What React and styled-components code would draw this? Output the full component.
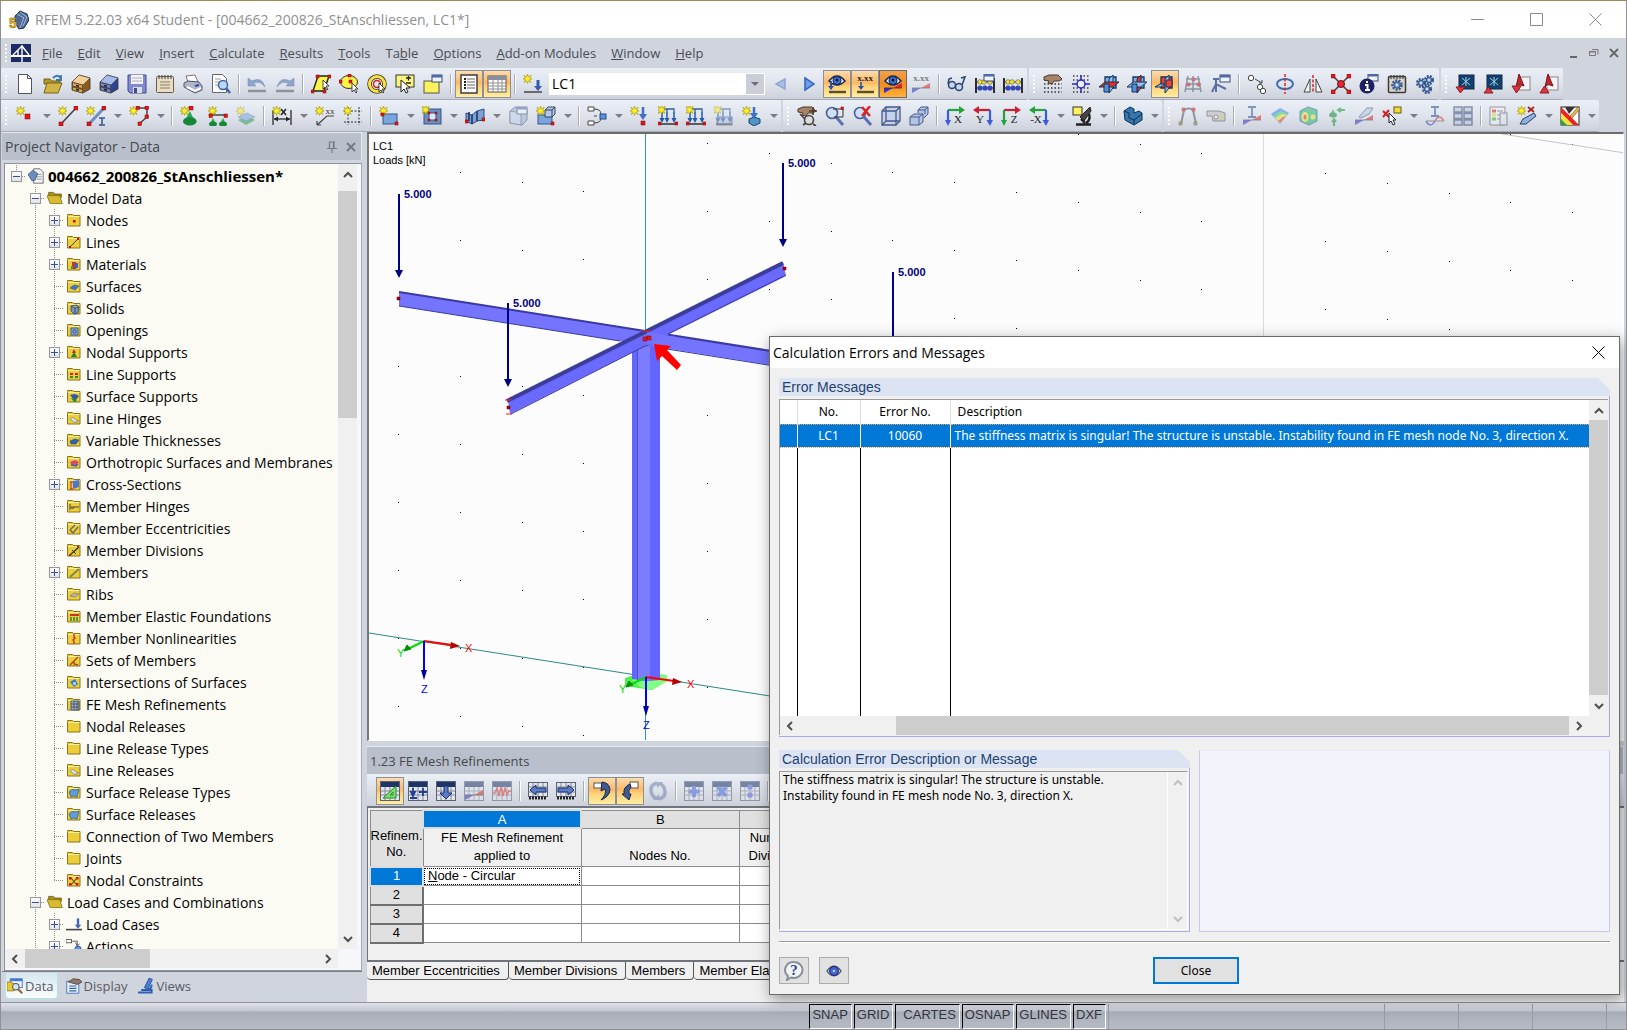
import React, { useState } from 'react';
import styled, { createGlobalStyle, css } from 'styled-components';

const UI_FONT = `'Open Sans', 'Noto Sans', sans-serif`;
const ARIAL = `'Liberation Sans', Arial, sans-serif`;
const TAHOMA = `'Noto Sans', 'Open Sans', sans-serif`;

const GlobalStyle = createGlobalStyle`
    *{
        box-sizing: border-box;
    }

    body{
        margin: 0;
        background: #d0d4dd;
        font-family: ${UI_FONT};
        font-size: 14px;
        color: #000;
    }

    button, select, textarea{
        font: inherit;
        color: inherit;
        margin: 0;
        padding: 0;
        border: 0;
        border-radius: 0;
        background: none;
    }
`

/* ---------- icons ---------- */

const Star = ({ x = 0, y = 0 }) =>
    <path
        transform={`translate(${x} ${y})`}
        d='M4.5 0l1 3 2.8-1.8L6.700 4 9 4.800 6.500 5.800 8 8.500 5.300 6.800 4.500 9.500 3.600 6.800 1 8.500 2.500 5.800 0 4.800 2.400 4 1 1.200 3.600 3z'
        fill='#fff02a' stroke='#a39400' strokeWidth='.6'
    />

const Dot = ({ x, y, s = 4, fill = '#e01818' }) =>
    <rect x={x} y={y} width={s} height={s} fill={fill} stroke='#8b0000' strokeWidth='.5' />

const Line = ({ d, c = '#444', w = 1.2, f = 'none' }) =>
    <path d={d} stroke={c} strokeWidth={w} fill={f} />

const Cabinet = ({ top, side, front }) => <>
    <path d='M1 8l7-7 11 3v11l-7 4-11-3z' fill={side} stroke='#3a3226' strokeWidth='.8' />
    <path d='M1 8l7-7 11 3-7 7z' fill={top} stroke='#3a3226' strokeWidth='.5' />
    <path d='M1.500 8.500l10 2.500v3.500l-10-2.500zM1.500 13l10 2.500V19l-10-3z' fill={front} stroke='#4b3d28' strokeWidth='.7' />
    <path d='M5 11.500l3 .8M5 15.500l3 .8' stroke='#222' strokeWidth='1.600' />
</>

const Sheet = ({ children }) => <>
    <rect x='1.500' y='2.500' width='17' height='16' rx='1' fill='#e9ddc8' stroke='#6d5c42' />
    <path d='M4 1v4M7 1v4M10 1v4M13 1v4M16 1v4' stroke='#555' strokeWidth='1.200' />
    {children}
</>

const Cube = () => <>
    <path d='M2 5l5-4 12 2v11l-5 5-12-2z' fill='#9fb4d6' stroke='#44597d' />
    <path d='M2 5l11 2v12l-11-2zM13 7l6-4' fill='#c3d2ea' stroke='#44597d' strokeWidth='.8' />
    <WindowTag />
</>

const GridTable = ({ children }) => <>
    <rect x='.5' y='.5' width='19' height='19' fill='#e2e5ec' stroke='#5a6274' />
    <rect x='1' y='1' width='18' height='5' fill='#1f3466' />
    <path d='M5 6v13M10 6v13M15 6v13M1 10h18M1 14h18' stroke='#82899a' strokeWidth='1' />
    {children}
</>

const GridArrow = ({ d }) => <>
    <rect x='.5' y='1.500' width='19' height='14' fill='#e2e5ec' stroke='#5a6274' />
    <path d='M5 2v13M10 2v13M15 2v13M1 6h18M1 11h18' stroke='#82899a' />
    <path d='M1 17h18' stroke='#222' strokeWidth='3' strokeDasharray='2 1' />
    <path d={d} fill='#5b7cc8' stroke='#1d2f66' />
</>

const Planes = ({ hot }) => <>
    <path d='M6 3h11v11H6z' fill={hot === 2 ? '#f04030' : '#7bb4ea'} stroke='#16325c' strokeWidth='1.300' />
    <path d='M10 5l4-4v13l-4 5z' fill={hot === 1 ? '#e82c20' : '#8fc2f0'} stroke='#16325c' />
    <path d={hot === 2 ? 'M0 13l5-3h5l-4 3z' : 'M0 13l6-5h14l-6 5z'} fill={hot === 0 ? '#e82c20' : '#8fc2f0'} stroke='#16325c' />
    {hot === 2
        ? <path d='M11 6h6v7h-6z' fill='#f04030' stroke='#16325c' />
        : <path d='M5 10h5v8H5z' fill='#4d92d8' stroke='#16325c' />
    }
</>

const Eye = () => <>
    <path d='M2 7q8-10 16 0-8 8-16 0z' fill='#dfe9f8' stroke='#1c2c50' strokeWidth='1.600' />
    <circle cx='10' cy='6.500' r='4' fill='#3d76d8' stroke='#10224c' />
    <circle cx='10' cy='6' r='1.600' fill='#0a1024' />
</>

const Ground = () => <path d='M2 18h17' stroke='#5a4f28' strokeWidth='2.400' />

const Slope = () => <>
    <path d='M1 19v-5l9 0z' fill='#3232d0' /><path d='M19 9v5h-9z' fill='#e22626' />
    <path d='M1 14h18' stroke='#333' strokeWidth='.8' />
</>

const Abacus = () => <>
    <path d='M1 4v15M19 4v15' stroke='#1a1a1a' strokeWidth='1.800' />
    <path d='M1 8h18M1 14h18' stroke='#333' />
    <circle cx='5' cy='8' r='2.300' fill='#f4e432' stroke='#555' strokeWidth='.6' />
    <circle cx='9' cy='8' r='2.300' fill='#f4e432' stroke='#555' strokeWidth='.6' />
    <circle cx='15' cy='8' r='2.300' fill='#f4e432' stroke='#555' strokeWidth='.6' />
    <circle cx='5' cy='14' r='2.600' fill='#3448b8' /><circle cx='10' cy='14' r='2.600' fill='#3448b8' /><circle cx='15' cy='14' r='2.600' fill='#3448b8' />
</>

const WindowTag = ({ x = 9, y = 1 }) => <>
    <rect x={x} y={y} width='10' height='7' fill='#eef3fc' stroke='#3c4c70' />
    <rect x={x} y={y} width='10' height='2.500' fill='#4f6aa6' />
</>

const Support = ({ x, y }) =>
    <g transform={`translate(${x} ${y})`}>
        <path d='M4 0l2 4H2z' fill='#2aa84a' /><ellipse cx='4' cy='6' rx='4' ry='2.500' fill='#188638' />
    </g>

const Tee = ({ a, b, letter, flip }) => <>
    <path d={flip ? 'M17 4H4' : 'M3 4h13'} stroke={a} strokeWidth='2.200' />
    <path d={flip ? 'M6 0L0 4l6 4z' : 'M14 0l6 4-6 4z'} fill={a} />
    <path d={flip ? 'M17 4v12' : 'M3 4v12'} stroke={b} strokeWidth='2.200' />
    <path d={flip ? 'M13.500 14h6.500L17 20z' : 'M0 14h6l-3 6z'} fill={b} />
    <text x={flip ? 7 : 13} y='17' textAnchor='middle' fontFamily='Liberation Serif, serif' fontSize='11' fill='#222'>{letter}</text>
</>

const Gear = ({ x, y, r }) => <>
    <circle cx={x} cy={y} r={r} fill='none' stroke='#38588f' strokeWidth={r * 0.9} strokeDasharray='1.800 1' />
    <circle cx={x} cy={y} r={r * 0.8} fill='#6f94cf' stroke='#294677' strokeWidth='.8' />
    <circle cx={x} cy={y} r={r * 0.3} fill='#eef' />
</>

const Loads = () => <>
    <path d='M4 8V3h5v5M9 8V3h7v5' stroke='#34609c' strokeWidth='1.300' fill='none' />
    <path d='M4 6v8M9 6v8M16 6v8' stroke='#3f74c4' strokeWidth='1.800' />
    <path d='M1.500 12h5L4 17zM6.500 12h5L9 17zM13.500 12h5L16 17z' fill='#2858a8' />
    <path d='M2 18h16' stroke='#333' strokeWidth='1.500' />
</>

const Hand = () =>
    <path d='M1 3l5-2h9l4 4-3 2-5 0-2 3-4-1 1-2-5-1z' fill='#a58468' stroke='#50382a' strokeWidth='1' />

const Beads = () => <path d='M1 10h18M1 14h18M1 18h18M1 6h18' stroke='#333' strokeDasharray='1.500 2' strokeWidth='1.500' />

const ICONS = {
    new: <path d='M3.500.5h9l4 4v15h-13zM12.500.5v4h4' fill='#fff' stroke='#555' />,
    open: <>
        <path d='M1 5h6l2 2h8v3H1z' fill='#b5972a' stroke='#77621a' />
        <path d='M4 9h15l-4 10H1z' fill='#d0b545' stroke='#77621a' />
        <path d='M10 4q5-5 8 1M18 1v5h-5' fill='none' stroke='#3d75b4' strokeWidth='1.800' />
    </>,
    cabinet: <Cabinet top='#f2d09a' side='#8a5a20' front='#e0a855' />,
    cabinetBlue: <Cabinet top='#a8bcec' side='#2c4590' front='#6f8bd8' />,
    save: <>
        <path d='M1 1h18v18H3l-2-2z' fill='#8189cf' stroke='#434a86' />
        <rect x='4' y='1' width='12' height='9' fill='#f4f4f8' /><path d='M5 4h10M5 7h10' stroke='#aab' />
        <rect x='6' y='13' width='9' height='6' fill='#d9dbe2' /><rect x='7' y='14' width='3' height='5' fill='#434a86' />
    </>,
    clipboard: <Sheet><path d='M5 8h10M5 11h10M5 14h10' stroke='#8b7b5e' /></Sheet>,
    print: <>
        <path d='M5 8L3 2l9-1 3 7z' fill='#fff' stroke='#777' />
        <path d='M1 9l4-2 11 1 3 4v4l-7 3L1 13z' fill='#b0b6c8' stroke='#50566a' /><path d='M4 13l8 4 6-3' fill='none' stroke='#fff' strokeWidth='2' />
        <path d='M12 12l4-1' stroke='#3340c0' strokeWidth='2' />
    </>,
    preview: <>
        <path d='M1.500.5h10l4 4v14h-14z' fill='#fff' stroke='#666' /><path d='M4 5h6M4 8h8M4 11h5' stroke='#999' />
        <circle cx='12' cy='11' r='4.500' fill='#bcd8f5' stroke='#3b66a4' strokeWidth='1.500' /><path d='M15 14l4 5' stroke='#3b66a4' strokeWidth='2.500' />
    </>,
    undo: <><path d='M1 4v8h8L6.500 9.500Q13 6 18 13 15 2 5 7z' fill='#8ea6cc' stroke='#6f87b0' strokeWidth='.5' /><path d='M1 17h18' stroke='#8e929b' strokeWidth='2.500' /></>,
    redo: <><path d='M19 4v8h-8l2.500-2.500Q7 6 2 13 5 2 15 7z' fill='#8ea6cc' stroke='#6f87b0' strokeWidth='.5' /><path d='M1 17h18' stroke='#8e929b' strokeWidth='2.500' /></>,
    selPoly: <><path d='M7 2h11l-5 15H2z' fill='#fbf34a' stroke='#222' strokeWidth='1.400' /><Dot x='5' y='1' s='3' /><Dot x='17' y='1' s='3' /><Dot x='0' y='16' s='3' /><Dot x='12' y='16' s='3' /><path d='M12 6v9l2-2 2 3 1-1-2-3h3z' stroke='#222' strokeWidth='.8' fill='#fff' /></>,
    selEllipse: <><ellipse cx='10' cy='8' rx='8.500' ry='6.500' fill='#fbf34a' stroke='#333' /><Dot x='0' y='6' s='3' /><Dot x='9' y='0' s='3' /><Dot x='10' y='6' s='3' /><path d='M13 9v9l2-2 2 3 1-1-2-3h3z' stroke='#222' strokeWidth='.8' fill='#fff' /></>,
    selRing: <><circle cx='10' cy='10' r='7.500' fill='none' stroke='#333' strokeWidth='4.500' /><circle cx='10' cy='10' r='7.500' fill='none' stroke='#fbe23a' strokeWidth='3' /><circle cx='10' cy='10' r='3.500' fill='none' stroke='#d02020' strokeWidth='1.500' /><path d='M12 9v9l2-2 2 3 1-1-2-3h3z' stroke='#222' strokeWidth='.8' fill='#fff' /></>,
    selPlus: <><rect x='1' y='1' width='18' height='12' fill='#fbf47c' stroke='#333' /><path d='M11 4h5M13.500 2v4.500M11 9h5' stroke='#222' strokeWidth='1.300' /><path d='M6 6v12l3-3 2 4 2-1-2-4h4z' fill='#fff' stroke='#222' /></>,
    selWindow: <><rect x='1' y='7' width='15' height='12' fill='#fbf25c' stroke='#555' /><WindowTag /></>,
    navigator: <><rect x='2' y='1' width='16' height='18' fill='#fff' stroke='#3b3b44' strokeWidth='1.500' /><path d='M5 5h2M5 8h2M5 11h2M5 14h2' stroke='#222' strokeWidth='2' /><path d='M8 5h8M8 8h8M8 11h8M8 14h8' stroke='#666' /></>,
    table: <><rect x='1' y='2' width='18' height='16' fill='#fff' stroke='#555' /><rect x='1' y='2' width='18' height='4' fill='#8a8fa0' /><path d='M6 6v12M11 6v12M15 6v12M1 9h18M1 12h18M1 15h18' stroke='#8d8d95' /></>,
    loadNew: <><Star /><path d='M15 6v8' stroke='#3459b0' strokeWidth='3' /><path d='M11 12h8l-4 5z' fill='#3459b0' /><path d='M1 18h18' stroke='#444' strokeWidth='1.500' /></>,
    prev: <path d='M14 5v10l-9-5z' fill='#a9c0ea' stroke='#8fa5d0' strokeWidth='1.500' />,
    next: <path d='M6 4v12l9-6z' fill='#6f9cec' stroke='#2f5fc0' strokeWidth='1.500' />,
    showLoad: <><Eye /><path d='M4 7v8' stroke='#2b50b0' strokeWidth='2' /><path d='M1 12h6l-3 4z' fill='#2b50b0' /><Ground /></>,
    showVal: <><text x='10' y='7' textAnchor='middle' fontSize='9' fontWeight='bold' fontFamily='Liberation Serif, serif' fill='#222'>x.xx</text><path d='M6 8v6' stroke='#2b50b0' strokeWidth='1.600' /><path d='M3 12h6l-3 4z' fill='#2b50b0' /><Ground /></>,
    showRes: <><Eye /><Slope /></>,
    showResVal: <><text x='10' y='7' textAnchor='middle' fontSize='9' fontWeight='bold' fontFamily='Liberation Serif, serif' fill='#222'>x.xx</text><Slope /></>,
    glasses: <><circle cx='5' cy='11' r='3.500' fill='#c6d6ee' stroke='#2f4672' strokeWidth='1.500' /><circle cx='12' cy='13' r='3.500' fill='#c6d6ee' stroke='#2f4672' strokeWidth='1.500' /><path d='M1 10l1-5 3-1M15 11l3-8-4 1' fill='none' stroke='#2f4672' strokeWidth='1.600' /></>,
    abacusWin: <><Abacus /><WindowTag x='9' y='0' /></>,
    abacus: <Abacus />,
    handGrid: <><Beads /><Hand /></>,
    gridSnap: <><path d='M2 2h16M2 6h16M2 14h16M2 18h16' stroke='#444' strokeDasharray='1.500 2' strokeWidth='1.500' /><path d='M10 1v18M1 10h18' stroke='#2a2ab8' strokeWidth='1.500' /><circle cx='10' cy='10' r='4' fill='#eef' stroke='#2a2ab8' strokeWidth='1.500' /></>,
    planeXY: <Planes hot={0} />,
    planeYZ: <Planes hot={1} />,
    planeXZ: <Planes hot={2} />,
    meshGrid: <><Line d='M5 2L2 18M10 2v16M15 2l3 16M3 5h14M3 10h15M2 15h16' c='#4b5766' w={1.500} /><Dot x='9' y='4' s='3' /><Dot x='4' y='9' s='3' /><Dot x='14' y='9' s='3' /></>,
    axisWin: <><path d='M5 18v-8l10 5M5 10L1 18M5 10V4M2 5h6' stroke='#5a70a4' strokeWidth='2' fill='none' /><WindowTag /></>,
    moveCopy: <><circle cx='4' cy='4' r='2.700' fill='#fff' stroke='#444' /><circle cx='13' cy='13' r='2.700' fill='#fff' stroke='#444' /><circle cx='16' cy='17' r='2.700' fill='#fff' stroke='#444' /><path d='M8 5l7 4M15 6v3h-3' stroke='#444' fill='none' /></>,
    rotate: <><ellipse cx='10' cy='10' rx='8' ry='5' fill='none' stroke='#3d6bb0' strokeWidth='2' /><path d='M10 0v20' stroke='#d22' strokeDasharray='3 1.500' strokeWidth='1.500' /></>,
    mirror: <><path d='M7 5v13H1zM13 5v13h6z' fill='#f4f4f4' stroke='#444' /><path d='M10 1v18' stroke='#d22' strokeDasharray='3 1.500' strokeWidth='1.500' /></>,
    explode: <><Line d='M2 2l16 16M18 2L2 18' w={1.600} /><circle cx='10' cy='10' r='3.500' fill='#e23' stroke='#611' /><Dot x='0' y='0' /><Dot x='16' y='0' /><Dot x='0' y='16' /><Dot x='16' y='16' /></>,
    info: <><WindowTag x='9' y='0' /><circle cx='8' cy='12' r='7.500' fill='#1c1f62' /><path d='M8 7v2M6 11h2.500v5M6 16h5' stroke='#fff' strokeWidth='2' fill='none' /></>,
    sheetGear: <><rect x='1.500' y='2.500' width='17' height='16' rx='1' fill='#d9d4cc' stroke='#3d3a34' strokeWidth='1.500' /><path d='M4 1v4M7 1v4M10 1v4M13 1v4M16 1v4' stroke='#444' strokeWidth='1.200' /><Gear x={10} y={11} r={4} /></>,
    gears: <><Gear x={6} y={9} r={3.500} /><Gear x={14} y={6} r={3.500} /><Gear x={12} y={15} r={3.500} /></>,
    importDxf: <><rect x='4' y='1' width='15' height='14' fill='#14406e' stroke='#0c294a' /><path d='M7 4l8 7M15 4l-8 7M11 3v9' stroke='#9fd6e8' /><path d='M1 13h9l-4.500 6z' fill='#e2343a' stroke='#8b1a1f' /></>,
    exportDxf: <><rect x='4' y='1' width='15' height='14' fill='#14406e' stroke='#0c294a' /><path d='M7 4l8 7M15 4l-8 7M11 3v9' stroke='#9fd6e8' /><path d='M1 19h9l-4.500-6z' fill='#e2343a' stroke='#8b1a1f' /></>,
    importPdf: <><rect x='8' y='3' width='11' height='13' fill='#f4f4f6' stroke='#888' /><path d='M8 0l5 12q-8-3-8 1z' fill='#c0262c' stroke='#7a1014' /><path d='M1 12h9l-4.500 7z' fill='#e2343a' stroke='#8b1a1f' /></>,
    exportPdf: <><rect x='8' y='3' width='11' height='13' fill='#f4f4f6' stroke='#888' /><path d='M9 0l5 12q-7-3-8 1z' fill='#c0262c' stroke='#7a1014' /><path d='M1 19h9l-4.500-7z' fill='#e2343a' stroke='#8b1a1f' /></>,

    node: <><Star x={1} /><Dot x='10' y='8' s='5' /></>,
    line: <><Line d='M3 18L18 2' w={1.600} /><Star /><Dot x='1' y='16' /><Dot x='16' y='0' /></>,
    member: <><Line d='M3 18L18 2' c='#6b90c8' w={3} /><Star /><Dot x='1' y='16' /><Dot x='16' y='0' /><path d='M13 12h6M16 12v7M13 19h6' stroke='#3a5590' strokeWidth='1.600' /></>,
    polyline: <><Line d='M8 2h10v9l-8 7' w={1.500} /><Star /><Dot x='7' y='0' s='3.500' /><Dot x='16' y='0' s='3.500' /><Dot x='16' y='9' s='3.500' /><Dot x='9' y='16' s='3.500' /></>,
    nodeSup: <><g transform='translate(3 5) scale(1.700)'><Support x={0} y={0} /></g><Star /><Dot x='9' y='0' s='4' /></>,
    lineSup: <><Line d='M2 9h16' w={1.500} /><Star /><Dot x='1' y='8' s='3.500' /><Dot x='16' y='8' s='3.500' /><Support x={1} y={12} /><Support x={11} y={12} /></>,
    surfSup: <><path d='M2 14l9-4 8 4-9 5z' fill='#2f9c56' /><path d='M2 11l9-4 8 4-9 4z' fill='#7ea8dc' stroke='#3c66a0' strokeWidth='.6' /><Star /></>,
    dim: <><Line d='M1 4v15M19 4v15M2 13h16' w={1.500} /><path d='M2 13l4-2.500v5zM18 13l-4-2.500v5z' fill='#222' /><Star /><path d='M9 3l5 6M14 3l-5 6' stroke='#222' strokeWidth='1.500' /></>,
    dimXX: <><Line d='M19 10H12L2 19M2 19v-4M2 19h4' /><Star /><text x='15' y='8' fontSize='9' fontFamily='Liberation Serif, serif' textAnchor='middle' fill='#333'>xx</text></>,
    guide: <><path d='M5 1v18M16 1v18M1 5h18M1 16h18' stroke='#333' strokeDasharray='2 1.500' /><Star /></>,
    surface: <><rect x='4' y='8' width='14' height='10' fill='#7aa6dc' stroke='#34568c' /><Star /><Dot x='2' y='7' s='3' /><Dot x='16' y='16' s='3' /></>,
    opening: <><rect x='2' y='3' width='17' height='15' fill='#6d8fc0' stroke='#34568c' /><rect x='7' y='7' width='7' height='7' fill='#dfe7f3' stroke='#34568c' /><Star x={-1} y={-1} /><Dot x='6' y='6' s='2' /><Dot x='13' y='6' s='2' /><Dot x='6' y='13' s='2' /><Dot x='13' y='13' s='2' /></>,
    curved: <><path d='M1 7l6 2 5-4 7-2v11l-7 1-5 3-6-3z' fill='#7ba1d6' stroke='#284a80' /><Line d='M7 9v9M12 5v10M4 6v9' c='#1c3868' w={1.600} /><Dot x='0' y='14' s='3' /><Dot x='17' y='12' s='3' /></>,
    solid: <Cube />,
    solidNew: <><rect x='2' y='9' width='14' height='9' fill='#7aa6dc' stroke='#34568c' /><path d='M9 4l3-3h7v7l-3 3H9z' fill='#b5c8e6' stroke='#33435e' /><path d='M9 4h7v7M16 4l3-3' fill='none' stroke='#33435e' /><Star /><Dot x='15' y='16' s='3' /></>,
    combos: <><path d='M1 1h6v4H1zM1 15h6v4H1z' fill='#fff' stroke='#444' /><path d='M7 3q7 0 7 5M7 17q7 0 7-5M7 10h3' stroke='#444' fill='none' /><rect x='13' y='8' width='6' height='5' fill='#5793e2' stroke='#254c88' /></>,
    nodalLoad: <><path d='M13 1v10' stroke='#3d70c8' strokeWidth='2.500' /><path d='M9 8h8l-4 6z' fill='#3d70c8' /><Star /><Dot x='11' y='15' /></>,
    memLoad: <><Loads /><Star x={-1} y={-1} /><Dot x='0' y='16' s='3' /><Dot x='17' y='16' s='3' /></>,
    surfLoad: <><rect x='3' y='11' width='15' height='8' fill='#b5c8e6' stroke='#44597d' /><Loads /><Star x={-1} y={-1} /></>,
    freeLoad: <><path d='M7 13l5-2 6 2v4l-6 3-5-3z' fill='#4e96c8' stroke='#1d4266' /><path d='M12 1v7' stroke='#3d70c8' strokeWidth='2.500' /><path d='M8 7h8l-4 6z' fill='#3d70c8' /><Star /></>,

    handMove: <><Hand /><circle cx='12' cy='14' r='4.500' fill='#ddd' stroke='#444' strokeWidth='1.600' /><path d='M3 8l5 5M6 19l3-2M16 1v8M12 5h8M16 18l3 2' stroke='#4a3a2c' strokeWidth='1.600' /></>,
    zoomWin: <><circle cx='7' cy='7' r='5.500' fill='#cfe0f6' stroke='#4a5f9a' strokeWidth='1.600' /><path d='M11 11l7 8' stroke='#5a70b4' strokeWidth='3' /><path d='M8 3h10v8H9' stroke='#333' fill='none' /><Dot x='16' y='1' s='2.500' /></>,
    zoomX: <><circle cx='7' cy='7' r='5.500' fill='#cfe0f6' stroke='#4a5f9a' strokeWidth='1.600' /><path d='M11 11l7 8' stroke='#5a70b4' strokeWidth='3' /><path d='M9 1l8 9M17 0L9 10' stroke='#d22' strokeWidth='2.500' /></>,
    isoView: <><path d='M1 5l4-4h14v14l-4 4H1z' fill='#c6d2ea' stroke='#46598a' strokeWidth='1.300' /><path d='M1 5h14v14M15 5l4-4M5 1v14h14M5 15l-4 4' fill='none' stroke='#46598a' strokeWidth='1.300' /></>,
    multiCube: <path d='M1 11h9v8H1zM1 11l4-3h9v8l-4 3M10 11l4-3M9 7V4l3-3h7v7l-4 4M9 4h7v4M16 4l3-3' fill='#b4c4e4' stroke='#46598a' />,
    viewX: <Tee a='#24a33c' b='#3b5bd8' letter='X' />,
    viewY: <Tee a='#cc1f30' b='#3b5bd8' letter='Y' flip />,
    viewZ: <Tee a='#cc1f30' b='#24a33c' letter='Z' />,
    viewMX: <Tee a='#24a33c' b='#3b5bd8' letter='-X' flip />,
    scope: <><rect x='1' y='1' width='9' height='8' fill='#fbf25c' stroke='#333' /><path d='M18 1l-10 10 4 4 7-10z' fill='#444' stroke='#222' /><path d='M4 18.500h15M9 13l4 4M17 8q2 6-3 9' stroke='#222' strokeWidth='2.400' fill='none' /></>,
    block: <><path d='M1 5l6-4 4 2v4l5-2 3 2v7l-8 5-9-5z' fill='#3576ae' stroke='#10304e' /><path d='M1 5l5 2v5l5 2 8-6M11 14v5' fill='none' stroke='#10304e' /></>,
    frame: <><Line d='M3 18L6 4q5-3 9 0l3 14' c='#555' w={2} /><Dot x='4' y='2' s='3' /><Dot x='14' y='2' s='3' /><Dot x='1' y='16' s='3' fill='#2b2' /><Dot x='16' y='16' s='3' fill='#2b2' /></>,
    section: <><path d='M1 5h12l6 2v8H7l-1-5H1z' fill='#bbb' stroke='#555' /><circle cx='10' cy='11' r='2' fill='#fff' stroke='#555' /><path d='M14 9h3v4h-3z' fill='#cc3' /></>,
    beamRes: <><path d='M6 1h8M10 1v10M6 11h8' stroke='#2a4f96' strokeWidth='1.800' /><Slope /></>,
    surfRes: <><path d='M1 8L10 2l9 5-9 11z' fill='#3b82f0' /><path d='M3 10l8-5 7 3-8 9z' fill='#3bd06a' /><path d='M5 12l7-4 5 1-7 8z' fill='#f3e03a' /><path d='M8 15l5-4 3-1-6 7z' fill='#ea3a2a' /></>,
    solidRes: <><path d='M2 5l8-4 9 3v11l-8 4-9-4z' fill='#29b867' stroke='#1c5fa8' /><ellipse cx='7' cy='11' rx='3.500' ry='5' fill='#f1e336' /><ellipse cx='7' cy='11' rx='1.500' ry='2.500' fill='#e0352a' /><circle cx='15' cy='11' r='2.500' fill='#f1e336' /></>,
    supRes: <><Support x={3} y={3} /><path d='M19 4h-6M15 2l-3 2 3 2M8 20v-6M6 16l2-3 2 3' stroke='#1d9a38' strokeWidth='2' fill='none' /></>,
    pen: <><path d='M5 11l8-9h6l-4 6-8 4z' fill='#b7cbe8' stroke='#3c5682' /><Slope /></>,
    delRes: <><path d='M1 5l6 6M7 4l-6 7' stroke='#c22' strokeWidth='2' /><rect x='12' y='1' width='7' height='6' fill='#f2dc3a' stroke='#665a10' /><path d='M7 7l7 7h-3l2 4-2 1-2-4-2 2z' fill='#fff' stroke='#222' /></>,
    sineRes: <><path d='M6 1h8M10 1v9M6 10h8' stroke='#2a4f96' strokeWidth='1.800' /><path d='M1 15h18' stroke='#333' strokeWidth='.8' /><path d='M1 15q4 8 9 0' fill='none' stroke='#33c' strokeWidth='1.400' /><path d='M10 15q4-8 9 0' fill='none' stroke='#c33' strokeWidth='1.400' /></>,
    grids: <path d='M1 1h8v5H1zM11 1h8v5h-8zM1 7.500h8v5H1zM11 7.500h8v5h-8zM1 14h8v5H1zM11 14h8v5h-8z' fill='#b9c6e2' stroke='#3c4d72' strokeWidth='1.500' />,
    legend: <><path d='M1 1h15v18H1z' fill='#f2f2f4' stroke='#555' /><path d='M3 5h4' stroke='#d22' strokeWidth='3' /><path d='M3 9h4' stroke='#dd2' strokeWidth='3' /><path d='M3 13h4' stroke='#2b4' strokeWidth='3' /><path d='M8 5h6M8 9h6M8 13h6' stroke='#555' /><rect x='11' y='7' width='7' height='12' fill='#dfe3ec' stroke='#556' /></>,
    starPen: <><Star /><path d='M11 1l6 5M17 1l-6 5' stroke='#a22' strokeWidth='1.800' /><path d='M3 18l3-5 11-6 2 3-10 8z' fill='#8fb2e0' stroke='#2d3f60' /></>,
    palette: <><rect x='1' y='1' width='18' height='18' fill='#fff' stroke='#222' /><path d='M1 1l18 18h-6L1 7z' fill='#e22' /><path d='M1 7l12 12H7L1 13z' fill='#f4e432' /><path d='M1 13l6 6H1z' fill='#28a838' /><path d='M5 1h10l-6 7z' fill='#333' /><path d='M10 10l8-9 2 2-8 9z' fill='#e9b23a' stroke='#654' strokeWidth='.6' /></>,

    tblEdit: <GridTable><path d='M3 17L16 5v12zM10 14h3v-3z' fill='#7ddf6c' stroke='#2a8a2a' /></GridTable>,
    tblPlus: <GridTable><path d='M5 7v6M3 11l2 4 2-4zM2 17h7M11 11h8M15 7v8' stroke='#223f94' strokeWidth='1.800' /></GridTable>,
    tblDown: <GridTable><path d='M8 5h4v7h4l-6 6-6-6h4z' fill='#5b7cc8' stroke='#1d2f66' /></GridTable>,
    tblSlope: <GridTable><Slope /></GridTable>,
    tblWave: <GridTable><path d='M1 12h2l2-5 2 8 2-9 2 9 2-8 2 7 2-4h3' stroke='#d33' fill='none' strokeWidth='1.400' /></GridTable>,
    tblLeft: <GridArrow d='M2 9l6-5v3h10v4H8v3z' />,
    tblRight: <GridArrow d='M18 9l-6-5v3H2v4h10v3z' />,
    syncR: <><rect x='2' y='2' width='8' height='5' fill='#fff' stroke='#555' /><path d='M10 1q8 1 8 8-1 7-9 10 6-6 4-11l-4 2z' fill='#3e5c92' stroke='#182848' /></>,
    syncL: <><rect x='10' y='1' width='8' height='6' fill='#fff' stroke='#555' /><path d='M10 3Q3 6 4 13l-2 0 7 6 2-6H9q-1-4 2-7z' fill='#3e5c92' stroke='#182848' /></>,
    refresh: <><path d='M9 2Q2 4 3 10t5 7M11 18q7-2 6-8t-5-7' fill='none' stroke='#7088ac' strokeWidth='3.500' /><path d='M5 19h6v-6zM15 1H9v6z' fill='#7088ac' /></>,
    cellAdd: <GridTable><path d='M10 5v11M4.500 10.500h11' stroke='#4866d8' strokeWidth='4' /></GridTable>,
    cellDel: <GridTable><path d='M6 6l8 9M14 6l-8 9' stroke='#4866d8' strokeWidth='4' /></GridTable>,
    cellDot: <GridTable><path d='M8 4h4v4H8zM8 12h4v4H8z' fill='#4866d8' stroke='#4866d8' /></GridTable>,

    app: <><path d='M6 6l5-5 7 3 2 6-5 8-5 1-4-6z' fill='#4c6894' stroke='#1d3354' /><path d='M8 4l7 4M11 2l7 5M15 7l-4 11M18 7l-4 9' stroke='#a9bcd8' /><text x='0' y='18' fontSize='14' fontWeight='bold' fontFamily='Liberation Sans, sans-serif' fill='#f0c020' stroke='#6b5200' strokeWidth='.5'>5</text></>,
    logo: <><path d='M0 1h20v18H0z' fill='#1c2a66' /><path d='M0 13h20' stroke='#fff' strokeWidth='2' /><path d='M11 2v17M11 3L2 12M11 3l7 9M7 7v6' stroke='#fff' strokeWidth='1.400' fill='none' /></>,
    doc: <><path d='M7 1h8l4 4v14H7z' fill='#f3f3f3' stroke='#555' /><path d='M11 8h6M11 11h6M11 14h6' stroke='#888' /><path d='M0 8l6-5 6 4-3 8-4 1z' fill='#6f8dba' stroke='#34517e' /></>,
    folderOpen: <><path d='M2 3h6l2 2h8v4H2z' fill='#a8911e' stroke='#6d5c10' /><path d='M0 7h16l3 10H4z' fill='#d8bc2e' stroke='#7d6914' /></>,
    loadCase: <><path d='M0 17h20' stroke='#444' strokeWidth='2' /><path d='M15 3v9' stroke='#4166b8' strokeWidth='3' /><path d='M11 11h8l-4 5z' fill='#4166b8' /></>,
    action: <><rect x='0' y='2' width='7' height='4' fill='#fff' stroke='#444' /><path d='M8 4h6v5M12 6l2 4 3-3' stroke='#333' fill='none' /><circle cx='15' cy='14' r='4' fill='#5b8fe8' stroke='#28509c' /></>,
    data: <><rect x='4' y='1' width='15' height='11' fill='#eef4fc' stroke='#3466b0' /><rect x='4' y='1' width='15' height='3' fill='#3f7ad8' /><path d='M0 5h6l1 2h2v9H0z' fill='#eacb2c' stroke='#8b7412' /><circle cx='11' cy='11' r='4' fill='#d6e6fa' stroke='#555' strokeWidth='1.300' /><path d='M14 14l5 5' stroke='#96622c' strokeWidth='2.500' /></>,
    display: <><rect x='1' y='4' width='15' height='15' fill='#e8f0fc' stroke='#3466b0' /><path d='M4 10h9M4 13h9M4 16h9' stroke='#3466b0' strokeWidth='1.500' /><path d='M3 5l6-4 8 1 3 3-6 3z' fill='#8e7a6c' stroke='#4a3c32' /></>,
    views: <><path d='M14 0l4 2-6 12-4-2z' fill='#4a7fd8' stroke='#1f468c' /><path d='M0 18h17v-3H4M12 14q5 0 5-6' fill='none' stroke='#2f5fb4' strokeWidth='2.500' /></>,
    help: <><path d='M10 1a8.500 8 0 1 1-3 15.500L3 19l1-4A8.500 8 0 0 1 10 1z' fill='#f1f3f7' stroke='#8a8f99' strokeWidth='2' /><text x='10' y='14' textAnchor='middle' fontSize='15' fontWeight='bold' fontFamily='Liberation Serif, serif' fill='#2b4290'>?</text></>,
    eye: <><path d='M2 10q8-11 16 0-8 11-16 0z' fill='#cfd6e4' stroke='#444c60' strokeWidth='1.300' /><circle cx='10' cy='10' r='5' fill='#3e5fd6' stroke='#18245c' /><circle cx='10' cy='10' r='1.500' fill='#bcd' /></>,
};

const Icon = ({ name, size = 20 }) =>
    <svg width={size} height={size} viewBox='0 0 20 20' aria-hidden='true'>{ICONS[name]}</svg>

// small drawing on top of a tree folder, 16x16 grid
const GLYPHS = {
    node: <path d='M7 8h2.500v2.500H7z' fill='#c00' />,
    line: <><path d='M4 13l8-8' stroke='#444' /><path d='M3 12h2v2H3zM11 4h2v2h-2z' fill='#c00' /></>,
    material: <><path d='M6 6h4v7H6z' fill='#c33' /><path d='M9 7h3v5H9z' fill='#36c' /><path d='M5 10h2v3H5z' fill='#3a3' /></>,
    surface: <path d='M4 10l4-3 5 1-4 4z' fill='#3c78c8' stroke='#1c4888' strokeWidth='.5' />,
    solid: <path d='M5 6l6-1 2 2-1 6-4 1-3-3zM5 6l4 2 4-1M9 8v6' fill='#7894c0' stroke='#26426e' strokeWidth='.8' />,
    opening: <path d='M5 6h7v7H5zM7 8h3v3H7z' fill='#8db2e4' stroke='#35588c' />,
    support: <><path d='M8 5l2 4H6z' fill='#d22' /><path d='M8 8l3 5H5z' fill='#188638' /></>,
    lineSup: <><path d='M4 7h3v2H4zM9 7h3v2H9z' fill='#c22' /><path d='M4 10h3v2H4zM9 10h3v2H9z' fill='#2a8a3a' /></>,
    surfSup: <><path d='M4 7l5-1 4 2-4 5z' fill='#2c5aa8' /><path d='M5 10l4 1 2 2-3 1z' fill='#1d8a3c' /></>,
    hinge: <path d='M4 9q3-3 5 0t3 1v2H8z' fill='#dfe8f5' stroke='#667' strokeWidth='.6' />,
    thick: <path d='M4 9l5-2 4 1-3 4H5z' fill='#2d68b8' stroke='#173c70' strokeWidth='.5' />,
    ortho: <><path d='M4 8l5-2 4 2-3 4H6z' fill='#d84a6a' /><path d='M5 11l5 1 2-2' stroke='#2d68b8' fill='none' strokeWidth='1.500' /></>,
    section: <><path d='M7 5l6-1v7l-6 2z' fill='#4a78d8' /><path d='M4 6h3M5 6v7M4 13h3' stroke='#c22' /></>,
    mhinge: <path d='M4 6v6M5 9h8M5 9a1.500 1.500 0 1 0 3 0' stroke='#444' fill='none' />,
    ecc: <path d='M4 10l5-5M7 13l5-6M4 10l3 3' stroke='#666' strokeWidth='1.400' />,
    div: <><path d='M4 13l9-8' stroke='#333' strokeWidth='1.300' /><path d='M6 8l4 4' stroke='#333' /><path d='M3 12h2v2H3zM11 4h2v2h-2z' fill='#a22' /></>,
    member: <path d='M4 13l9-8' stroke='#7d8a4a' strokeWidth='2' />,
    rib: <path d='M4 10l4-3 5 1-4 3z' fill='#b8b8a8' stroke='#666' strokeWidth='.6' />,
    found: <><path d='M4 7h9' stroke='#c22' strokeWidth='1.800' /><path d='M5 9v4M8 9v4M11 9v4' stroke='#1d8a3c' strokeWidth='1.500' /></>,
    nonlin: <path d='M8 4v3l1 1-2 2 1 1v3' stroke='#c22' fill='none' strokeWidth='1.300' />,
    sets: <path d='M4 13l4-4 4-4M8 9v3l4 1' stroke='#a42' fill='none' strokeWidth='1.400' />,
    inter: <><path d='M4 8l5-3 3 5-4 3z' fill='#3c78c8' /><path d='M7 8h3v3H7z' fill='#9cd0f0' /></>,
    mesh: <path d='M5 5h8v9H5zM5 8h8M5 11h8M8 5v9M11 5v9' fill='#a9b6cc' stroke='#33415c' strokeWidth='.8' />,
    srelease: <path d='M3 8q3-4 6-2l4-1-2 8q-4-2-6 0z' fill='#5f9cd8' stroke='#28588c' strokeWidth='.7' />,
    constraint: <><path d='M5 6l6 7M11 6l-6 7' stroke='#333' /><path d='M3 5h2.500v2.500H3zM10 5h2.500v2.500H10zM3 11h2.500v2.500H3zM10 11h2.500v2.500H10z' fill='#d11' /></>,
};

const Folder = ({ glyph }) =>
    <svg width='16' height='16' viewBox='0 0 16 16' aria-hidden='true'>
        <path d='M1.500 3.500v-1h5l1 1h6.500v10.500h-12.500z' fill='#eccf38' stroke='#8c7518' />
        <path d='M2 4.500h11.500' stroke='#fbeea0' />
        {GLYPHS[glyph]}
    </svg>

/* ---------- window frame ---------- */

const Page = styled.div`
    display: flex;
    flex-direction: column;
    height: 100vh;
    min-height: 700px;
    overflow: hidden;
    border: 1px solid #8f8f95;
    border-top-color: #9b8b52;
    position: relative;
    background: #d0d4dd;
`

const TitleBar = styled.header`
    flex: none;
    display: flex;
    align-items: center;
    gap: 6px;
    height: 37px;
    padding: 0 4px 0 8px;
    background: #fff;
    color: #8f8f8f;

    & > h1{
        flex: 1;
        margin: 0;
        font-size: 14px;
        font-weight: 400;
        white-space: nowrap;
    }
`

const WindowButton = styled.button`
    width: ${({ $small }) => $small ? '20px' : '53px'};
    height: 30px;
    display: flex;
    align-items: center;
    justify-content: center;
    flex: none;
`

const MenuBar = styled.nav`
    flex: none;
    display: flex;
    align-items: center;
    height: 30px;
    padding-right: 2px;
    color: #4a4d57;

    & > svg{
        margin-right: 4px;
    }

    & > .space{
        flex: 1;
    }
`

const Grip = styled.span`
    flex: none;
    width: 10px;
    height: 18px;
    background: repeating-linear-gradient(to bottom, #fafbfd 0 2px, transparent 2px 4px) 4px 0 / 2px 100% no-repeat;
`

const MenuItem = styled.button`
    flex: none;
    padding: 0 8px 0 7px;
    height: 24px;
    font-size: 13px;
    white-space: nowrap;
`

const MENU = ['_File', '_Edit', '_View', '_Insert', '_Calculate', '_Results', '_Tools', 'Ta_ble', '_Options', '_Add-on Modules', '_Window', '_Help'];

const Mnemonic = ({ text }) => {
    const [before, rest] = text.split('_');
    return <>{before}<u>{rest[0]}</u>{rest.slice(1)}</>
}

/* ---------- toolbars ---------- */

const ToolRow = styled.div`
    flex: none;
    display: flex;
    gap: 2px;
    height: 32px;
`

const ToolSegment = styled.div`
    flex: none;
    display: flex;
    align-items: center;
    height: 32px;
    background: linear-gradient(#ebeff6, #dfe4ed 50%, #cdd1db);
    border-bottom: 1px solid #a7abb5;
    border-radius: 0 2px 2px 0;
`

const highlight = css`
    border-color: #8d9099;
    background: linear-gradient(#fbdcb0, #fdb862 45%, #ffd27a 60%, #ffeda0);
`

const hotHighlight = css`
    border-color: #6d6a66;
    background: linear-gradient(#f0a050, #f88a1c 50%, #ffb23e);
`

const ToolButton = styled.button`
    flex: none;
    width: 28px;
    height: 28px;
    display: flex;
    align-items: center;
    justify-content: center;
    border: 1px solid transparent;
    ${({ $on }) => $on && highlight}
    ${({ $hot }) => $hot && hotHighlight}

    & > svg{
        opacity: ${({ disabled }) => disabled ? 0.55 : 1};
    }
`

const DropButton = styled.button`
    flex: none;
    width: 15px;
    height: 28px;

    &::after{
        content: '';
        display: block;
        margin: 0 auto;
        width: 0;
        border: 4px solid transparent;
        border-top-color: #7a7d85;
        border-bottom: 0;
    }
`

const Separator = styled.span`
    flex: none;
    width: 8px;
    height: 20px;
    background: linear-gradient(#a9adb8, #a9adb8) 3px 0 / 1px 100% no-repeat,
        linear-gradient(#fff, #fff) 4px 0 / 1px 100% no-repeat;
`

const Combo = styled.div`
    display: flex;
    width: 216px;
    height: 22px;
    margin: 0 2px;
    border: 1px solid #fff;
    background: #fff;

    & > select{
        flex: 1;
        appearance: none;
        padding-left: 2px;
        font-size: 14px;
        line-height: 20px;
    }

    & > span{
        width: 18px;
        background: #c9ced9;
        display: flex;
        align-items: center;
        justify-content: center;
        pointer-events: none;
    }

    & > span::after{
        content: '';
        border: 4px solid transparent;
        border-top-color: #6b6e76;
        border-bottom: 0;
    }
`

// "name:flag" - on, hot, off and drop change how the button is drawn
const Tools = ({ items }) => items.split(' ').map((item, i) => {
    if (item === '|') return <Separator key={i} />
    if (item === 'COMBO') return <Combo key={i}>
        <select aria-label='Load case' defaultValue='LC1'><option>LC1</option></select>
        <span />
    </Combo>

    const [name, flag] = item.split(':');
    return <React.Fragment key={i}>
        <ToolButton $on={flag === 'on'} $hot={flag === 'hot'} disabled={flag === 'off'} aria-label={name}>
            <Icon name={name} />
        </ToolButton>
        {flag === 'drop' ? <DropButton aria-label={`${name} options`} /> : null}
    </React.Fragment>
})

const TOOL_ROWS = [
    [
        'new open cabinet cabinetBlue save clipboard print preview | undo redo | selPoly selEllipse selRing selPlus selWindow | navigator:on table:on | loadNew COMBO prev next showLoad:on showVal:on showRes:hot showResVal:off | glasses abacusWin abacus',
        'handGrid gridSnap planeXY planeYZ planeXZ:on meshGrid:off axisWin | moveCopy rotate mirror explode info sheetGear gears',
        'importDxf exportDxf importPdf exportPdf',
    ],
    [
        'node:drop line member:drop polyline:drop | nodeSup lineSup surfSup:off | dim:drop dimXX guide | surface:drop opening:drop curved:drop solid:off solidNew:drop | combos:drop nodalLoad memLoad memLoad surfLoad:off freeLoad:drop',
        'handMove zoomWin zoomX isoView multiCube | viewX viewY viewZ viewMX:drop scope:drop | block:drop',
        'frame:off section:off | beamRes:off surfRes:off solidRes:off supRes:off pen:off delRes:drop sineRes:off grids:off | legend:off starPen:drop palette:drop',
    ],
];

/* ---------- scroll bars ---------- */

const Chevron = ({ dir, faint }) => {
    const d = { up: 'M2 9l4-4 4 4', down: 'M2 4l4 4 4-4', left: 'M8 2L4 6l4 4', right: 'M4 2l4 4-4 4' }[dir];
    return <svg width='12' height='12' viewBox='0 0 12 12' aria-hidden='true'>
        <path d={d} fill='none' stroke={faint ? '#bfbfbf' : '#505050'} strokeWidth='2' />
    </svg>
}

const ScrollTrack = styled.div`
    flex: none;
    display: flex;
    flex-direction: ${({ $across }) => $across ? 'row' : 'column'};
    ${({ $across }) => $across ? 'height: 19px;' : 'width: 19px;'}
    background: #f0f0f0;

    & > button{
        flex: none;
        width: 20px;
        height: 20px;
        display: flex;
        align-items: center;
        justify-content: center;
    }

    & > .lane{
        flex: 1;
        display: flex;
        flex-direction: inherit;
    }
`

const Thumb = styled.span`
    flex: ${({ $size }) => $size};
    background: #cdcdcd;
`

const Space = styled.span`
    flex: ${({ $size }) => $size};
`

const ScrollBar = ({ across, before = 0, thumb, after = 0, faint }) =>
    <ScrollTrack $across={across}>
        <button aria-label='Scroll back'><Chevron dir={across ? 'left' : 'up'} faint={faint} /></button>
        <div className='lane'>
            <Space $size={before} />
            {thumb ? <Thumb $size={thumb} /> : null}
            <Space $size={after} />
        </div>
        <button aria-label='Scroll on'><Chevron dir={across ? 'right' : 'down'} faint={faint} /></button>
    </ScrollTrack>

/* ---------- project navigator ---------- */

const Workspace = styled.main`
    flex: 1;
    min-height: 0;
    display: flex;
    gap: 5px;
`

const Navigator = styled.aside`
    flex: none;
    width: 361px;
    display: flex;
    flex-direction: column;
    padding-left: 1px;
`

const PanelHeader = styled.div`
    flex: none;
    display: flex;
    align-items: center;
    gap: 8px;
    height: 28px;
    padding: 0 4px 0 3px;
    border: 1px solid #e6eaf2;
    border-width: 1px 1px 0 0;
    background: #b9c0cb;
    color: #46484e;

    & > h2{
        flex: 1;
        margin: 0;
        font-size: 14px;
        font-weight: 400;
        white-space: nowrap;
    }

    & > button{
        display: flex;
    }
`

const TreeFrame = styled.div`
    flex: 1;
    min-height: 0;
    display: flex;
    flex-direction: column;
    margin: 3px 0 0 2px;
    border: 1px solid #8e929c;
    border-right-color: #a5abb8;
    padding: 0 4px 2px 0;
    background: #f6f7fa;

    & > div:first-child{
        flex: 1;
        min-height: 0;
        display: flex;
    }

    & > div:last-child{
        margin-right: 19px;
    }
`

const Tree = styled.ul`
    flex: 1;
    min-width: 0;
    margin: 0;
    padding: 1px 0 0 2px;
    list-style: none;
    overflow: hidden;
    background: #fcfbf3;
`

const TreeRow = styled.li`
    display: flex;
    align-items: center;
    height: 22px;
    white-space: nowrap;
    font-size: ${({ $bold }) => $bold ? '15px' : '14px'};
    font-weight: ${({ $bold }) => $bold ? 700 : 400};

    & > svg{
        flex: none;
        margin: 0 4px 0 2px;
    }
`

const dots = dir => `repeating-linear-gradient(to ${dir}, #8a8a8a 0 1px, transparent 1px 2px)`;

const Guide = styled.span`
    flex: none;
    width: 19px;
    height: 22px;
    padding: 6px 4px 0;
    background:
        ${dots('bottom')} 9px 0 / 1px ${({ $v }) => ({ full: '100%', top: '50%' }[$v] || '0')} no-repeat,
        ${dots('right')} 9px 11px / ${({ $h }) => $h ? '10px' : '0'} 1px no-repeat;
`

const Expander = styled.button`
    display: block;
    width: 11px;
    height: 11px;
    border: 1px solid #9297a0;
    background:
        linear-gradient(#34519c, #34519c) center / 7px 1px no-repeat,
        linear-gradient(#34519c, #34519c) center / 1px ${({ $open }) => $open ? '0' : '7px'} no-repeat,
        linear-gradient(#fff, #e2e2e2);
`

const TREE = [
    [0, '004662_200826_StAnschliessen*', '-', 'doc'],
    [1, 'Model Data', '-', 'folderOpen'],
    [2, 'Nodes', '+', 'node'],
    [2, 'Lines', '+', 'line'],
    [2, 'Materials', '+', 'material'],
    [2, 'Surfaces', '', 'surface'],
    [2, 'Solids', '', 'solid'],
    [2, 'Openings', '', 'opening'],
    [2, 'Nodal Supports', '+', 'support'],
    [2, 'Line Supports', '', 'lineSup'],
    [2, 'Surface Supports', '', 'surfSup'],
    [2, 'Line Hinges', '', 'hinge'],
    [2, 'Variable Thicknesses', '', 'thick'],
    [2, 'Orthotropic Surfaces and Membranes', '', 'ortho'],
    [2, 'Cross-Sections', '+', 'section'],
    [2, 'Member Hinges', '', 'mhinge'],
    [2, 'Member Eccentricities', '', 'ecc'],
    [2, 'Member Divisions', '', 'div'],
    [2, 'Members', '+', 'member'],
    [2, 'Ribs', '', 'rib'],
    [2, 'Member Elastic Foundations', '', 'found'],
    [2, 'Member Nonlinearities', '', 'nonlin'],
    [2, 'Sets of Members', '', 'sets'],
    [2, 'Intersections of Surfaces', '', 'inter'],
    [2, 'FE Mesh Refinements', '', 'mesh'],
    [2, 'Nodal Releases', '', 'plain'],
    [2, 'Line Release Types', '', 'plain'],
    [2, 'Line Releases', '', 'hinge'],
    [2, 'Surface Release Types', '', 'srelease'],
    [2, 'Surface Releases', '', 'srelease'],
    [2, 'Connection of Two Members', '', 'plain'],
    [2, 'Joints', '', 'plain'],
    [2, 'Nodal Constraints', '', 'constraint', 'last'],
    [1, 'Load Cases and Combinations', '-', 'folderOpen'],
    [2, 'Load Cases', '+', 'loadCase'],
    [2, 'Actions', '+', 'action'],
];

const TreeNode = ({ level, label, sign, icon, last }) =>
    <TreeRow $bold={level === 0}>
        {level > 0 ? <Guide /> : null}
        {level > 1 ? <Guide $v='full' /> : null}
        <Guide $v={last || level === 0 ? 'top' : 'full'} $h>
            {sign ? <Expander $open={sign === '-'} aria-label={label} /> : null}
        </Guide>
        {GLYPHS[icon] || !ICONS[icon] ? <Folder glyph={icon} /> : <Icon name={icon} size={16} />}
        {label}
    </TreeRow>

const NavTabs = styled.div`
    flex: none;
    display: flex;
    height: 31px;
    padding: 1px 0 3px 3px;
    gap: 7px;
    border-top: 1px solid #7c808a;
`

const NavTab = styled.button`
    display: flex;
    align-items: center;
    gap: 2px;
    padding: 0 3px 0 1px;
    font-size: 13px;
    color: #585b66;
    ${({ $active }) => $active && css`
        background: linear-gradient(#d6e6ee, #fafcfd);
        border: 1px solid #b4e2ea;
        border-top: 0;
        border-radius: 0 0 4px 4px;
    `}
`

const NavigatorPanel = () => {
    const [tab, setTab] = useState('Data');

    return <Navigator>
        <PanelHeader>
            <h2>Project Navigator - Data</h2>
            <button aria-label='Pin'>
                <svg width='10' height='12' viewBox='0 0 10 12'><path d='M2.500 1v6M7 1v6M2 1h6M0 7.500h10M5 8v4M6.500 1v6' stroke='#777a82' strokeWidth='1.200' /></svg>
            </button>
            <button aria-label='Close'>
                <svg width='12' height='12' viewBox='0 0 12 12'><path d='M2 2l8 8M10 2l-8 8' stroke='#777a82' strokeWidth='2' /></svg>
            </button>
        </PanelHeader>
        <TreeFrame>
            <div>
                <Tree>
                    {TREE.map(([level, label, sign, icon, last]) =>
                        <TreeNode key={label} {...{ level, label, sign, icon, last }} />
                    )}
                </Tree>
                <ScrollBar before={7} thumb={226} after={508} />
            </div>
            <ScrollBar across thumb={125} after={167} />
        </TreeFrame>
        <NavTabs>
            {['Data', 'Display', 'Views'].map(name =>
                <NavTab key={name} $active={tab === name} onClick={() => setTab(name)}>
                    <Icon name={name.toLowerCase()} size={16} />{name}
                </NavTab>
            )}
        </NavTabs>
    </Navigator>
}

/* ---------- model view ---------- */

const Right = styled.section`
    flex: 1;
    min-width: 0;
    display: flex;
    flex-direction: column;
    padding-right: 2px;
`

const ViewFrame = styled.div`
    flex: 1;
    min-height: 0;
    border: 1px solid #fff;
    border-top: 2px solid #6b6b6b;
    border-left: 2px solid #76787e;
    background: #fcfcfc;

    & > svg{
        display: block;
        width: 100%;
        height: 100%;
        font-family: ${ARIAL};
    }
`

const GRID_DOTS = [];
for (let k = 0; k < 20; k++) {
    for (let r = -8; r < 6; r++) {
        const x = Math.round(398 + 61.8 * k);
        const y = Math.round(366 + 9.8 * k + 68 * r);
        if (y > 133 && y < 742) GRID_DOTS.push([x, y]);
    }
}

const Load = ({ x, y }) => <>
    <path d={`M${x} ${y}v80`} stroke='#000080' strokeWidth='2' />
    <path d={`M${x - 4} ${y + 76}h8l-4 8z`} fill='#000080' />
    <text x={x + 5} y={y + 4} fontSize='11' fontWeight='bold' fill='#000080'>5.000</text>
</>

const Axes = ({ x, y }) =>
    <g transform={`translate(${x} ${y})`} fontSize='11'>
        <path d='M0 0l28 4' stroke='#f00' strokeWidth='2' />
        <path d='M27 1l9 4-10 3z' fill='#b00000' />
        <path d='M0 0l-14 7' stroke='#0d0' strokeWidth='2' />
        <path d='M-20 10l3-6 4 4z' fill='#009000' stroke='#009000' />
        <path d='M0 0v29' stroke='#00f' strokeWidth='2' />
        <path d='M-3 29h6l-3 10z' fill='#0000a0' />
        <text x='41' y='11' fill='#f00'>X</text>
        <text x='-27' y='16' fill='#0d0'>Y</text>
        <text x='-3' y='52' fill='#00f'>Z</text>
    </g>

const ModelView = () =>
    <ViewFrame>
        <svg role='img' aria-label='Structure with nodal loads'>
            <g transform='translate(-369 -134)'>
                <text x='373' y='150' fontSize='11'>LC1</text>
                <text x='373' y='164' fontSize='11'>Loads [kN]</text>
                {GRID_DOTS.map(([x, y]) => <rect key={`${x}-${y}`} x={x} y={y} width='1' height='1' />)}
                <path d='M1263.500 134v500' stroke='#dcdcdc' />
                <path d='M1502 134l123 19' stroke='#c4c4c4' />
                <path d='M645.500 134v608' stroke='#2a9d96' />
                <path d='M369 633l420 66' stroke='#2a8a88' />

                <path d='M625 678l16-5 26 2v6l-15 9-27-4z' fill='#4df04d' />
                <path d='M632 680l14-3 21-2v6l-15 9-12-3z' fill='#80ff80' />

                <path d='M632 340h28v340l-12 1-16-2z' fill='#6464ff' />
                <path d='M638 340h12v341h-12z' fill='#7c7cff' />
                <path d='M637.500 345v335' stroke='#5050d8' />

                <path d='M399 292l246 39 125 20 20 3v14l-20-3-125-20-246-39z' fill='#7474ff' />
                <path d='M399 292l246 39 145 23' stroke='#3a3aa0' strokeWidth='2' fill='none' />
                <path d='M399 306l221 35M667 349l120 19' stroke='#3a3aa0' />

                <path d='M508 400l275-138 3 14-141 70-135 68z' fill='#6a6aff' />
                <path d='M507 401l276-138' stroke='#3c3c9c' strokeWidth='4' />
                <path d='M511 414l134-68 8-2M668 334l118-59' stroke='#3a3aa0' fill='none' />
                <path d='M647 332l30 5-10 11-20-3z' fill='#7474ff' opacity='.8' />

                <Dot x='397' y='297' s='3' fill='#900' />
                <Dot x='507' y='406' s='3' fill='#900' />
                <Dot x='783' y='267' s='3' fill='#900' />
                <path d='M642 331h8M505 400h7M506 414h6' stroke='#e22' />
                <Dot x='643' y='337' /><Dot x='647' y='336' />

                <Load x={399} y={194} />
                <Load x={783} y={163} />
                <Load x={508} y={303} />
                <Load x={893} y={272} />

                <Axes x={424} y={641} />
                <Axes x={646} y={677} />

                <path d='M654 344l17 2-4 4 14 15-4 5-15-14-5 5z' fill='#f00' />
            </g>
        </svg>
    </ViewFrame>

/* ---------- table panel ---------- */

const TablePanel = styled.div`
    flex: none;
    height: 256px;
    margin-top: 5px;
    display: flex;
    flex-direction: column;
    background: #f0f0f0;
    font-family: ${ARIAL};
    font-size: 13px;
    overflow: hidden;

    & h2{
        font-family: ${UI_FONT};
        font-size: 13px;
    }
`

const TableTools = styled.div`
    flex: none;
    display: flex;
    align-items: center;
    height: 32px;
    padding: 2px 0 0 9px;
    background: linear-gradient(#ebeff6, #cdd1db);
`

const SheetArea = styled.div`
    flex: 1;
    padding: 1px 0 0 1px;
    border-top: 2px solid #70737a;
    border-left: 1px solid #70737a;
`

const SheetTable = styled.table`
    width: 451px;
    table-layout: fixed;
    border-collapse: collapse;

    & th, & td{
        padding: 0;
        border: 1px solid #8c8c8c;
        font-weight: 400;
        text-align: center;
        line-height: 18px;
    }

    & td{
        height: 19px;
        background: #fff;
        text-align: left;
        padding-left: 4px;
    }

    & thead th{
        height: 18px;
        line-height: 15px;
        background: #e0e0e0;
    }

    & thead tr:last-child th{
        height: 38px;
        padding-bottom: 1px;
        line-height: 18px;
        background: #f0f0f0;
        vertical-align: bottom;
    }

    & thead th.corner{
        vertical-align: bottom;
        line-height: 16px;
        padding-bottom: 6px;
    }

    & th.on{
        background: #0078d7;
        color: #fff;
        border: 2px solid #dcdcdc;
    }

    & tbody th{
        background: #e0e0e0;
        border-bottom: 2px solid #6e6e6e;
        border-right: 2px solid #6e6e6e;
        line-height: 16px;
    }

    & tbody th.on{
        background: #0078d7;
    }

    & td.focus{
        outline: 1px dotted #000;
        outline-offset: -2px;
    }
`

const SheetTabs = styled.div`
    flex: none;
    display: flex;
    height: 42px;
    border-top: 2px solid #70737a;
    white-space: nowrap;
`

const SheetTab = styled.button`
    flex: none;
    height: 18px;
    padding: 0 8px 0 5px;
    border: 1px solid #55575c;
    border-width: 0 1px 1px 0;
    border-radius: 0 0 4px 4px;
`

const RefinementTable = () =>
    <TablePanel>
        <PanelHeader><h2>1.23 FE Mesh Refinements</h2></PanelHeader>
        <TableTools>
            <Tools items='tblEdit:on tblPlus tblDown tblSlope:off tblWave:off | tblLeft tblRight | syncR:on syncL:on refresh:off | cellAdd:off cellDel:off cellDot:off |' />
        </TableTools>
        <SheetArea>
            <SheetTable>
                <colgroup><col width='53' /><col width='158' /><col width='158' /><col width='82' /></colgroup>
                <thead>
                    <tr>
                        <th rowSpan='2' className='corner'>Refinem.<br />No.</th>
                        <th className='on'>A</th><th>B</th><th>C</th>
                    </tr>
                    <tr>
                        <th>FE Mesh Refinement<br />applied to</th>
                        <th>Nodes No.</th>
                        <th>Number of<br />Divisions n</th>
                    </tr>
                </thead>
                <tbody>
                    {[1, 2, 3, 4].map(n =>
                        <tr key={n}>
                            <th className={n === 1 ? 'on' : undefined}>{n}</th>
                            <td className={n === 1 ? 'focus' : undefined}>{n === 1 ? <Mnemonic text='_Node - Circular' /> : null}</td>
                            <td /><td />
                        </tr>
                    )}
                </tbody>
            </SheetTable>
        </SheetArea>
        <SheetTabs>
            {['Member Eccentricities', 'Member Divisions', 'Members', 'Member Elastic Foundations'].map(name =>
                <SheetTab key={name}>{name}</SheetTab>
            )}
        </SheetTabs>
    </TablePanel>

/* ---------- error dialog ---------- */

const Dialog = styled.section`
    position: absolute;
    right: 6px;
    bottom: 34px;
    width: 851px;
    height: 659px;
    display: flex;
    flex-direction: column;
    border: 1px solid #6a6a6a;
    background: #f0f0f0;
    box-shadow: 2px 4px 14px rgba(0, 0, 0, .4);
`

const DialogTitle = styled.header`
    flex: none;
    display: flex;
    align-items: center;
    height: 31px;
    padding: 0 0 0 3px;
    background: #fff;

    & > h2{
        flex: 1;
        margin: 0;
        font-size: 14px;
        font-weight: 400;
    }

    & > button{
        width: 42px;
        height: 30px;
        display: flex;
        align-items: center;
        justify-content: center;
    }
`

const DialogBody = styled.div`
    flex: 1;
    min-height: 0;
    display: flex;
    flex-direction: column;
    padding: 10px 9px 10px;
`

const Group = styled.div`
    flex: 1;
    min-width: 0;
    display: flex;
    flex-direction: column;
    padding: 0 2px 2px 0;
    background:
        linear-gradient(#a9a9ee, #a9a9ee) right 0 bottom 0 / 1px calc(100% - 12px) no-repeat,
        linear-gradient(#a9a9ee, #a9a9ee) right 0 bottom 0 / 100% 1px no-repeat;

    & > h3{
        flex: none;
        margin: 0 -2px 3px 0;
        padding-left: 3px;
        height: 18px;
        line-height: 18px;
        font-family: ${ARIAL};
        font-size: 14px;
        font-weight: 400;
        color: #1f4270;
        background: #dce4f3;
        clip-path: polygon(0 0, calc(100% - 12px) 0, 100% 12px, 100% 100%, 0 100%);
    }
`

const MessageFrame = styled.div`
    flex: 1;
    min-height: 0;
    display: flex;
    flex-direction: column;
    border: 1px solid #9a9a9a;
    border-right: 0;
    border-bottom: 0;

    & > div:first-child{
        flex: 1;
        min-height: 0;
        display: flex;
    }

    & > div:last-child{
        margin-right: 19px;
    }
`

const MessageTable = styled.table`
    flex: 1;
    background: #fff;
    table-layout: fixed;
    border-collapse: collapse;
    font-family: ${TAHOMA};
    font-size: 12px;
    white-space: nowrap;

    & th, & td{
        padding: 0;
        font-weight: 400;
        text-align: center;
        border-right: 1px solid #000;
    }

    & th{
        height: 24px;
        border-color: #dcdcdc;
    }

    & th:last-child, & td:last-child{
        text-align: left;
        padding-left: 4px;
        border-right: 0;
    }

    & .selected td{
        height: 23px;
        color: #fff;
        background: #0078d7;
        border-color: #fff;
        border-top: 1px dotted #f0a050;
        border-bottom: 1px dotted #f0a050;
    }
`

const Details = styled.div`
    flex: none;
    display: flex;
    gap: 9px;
    height: 182px;
    margin-top: 13px;
`

const MessageText = styled.div`
    flex: 1;
    display: flex;
    border: 1px solid #9a9a9a;
    border-right-color: #fff;
    border-bottom-color: #fff;

    & > textarea{
        flex: 1;
        resize: none;
        overflow: hidden;
        padding: 0 3px;
        border-right: 1px solid #fff;
        font-family: ${TAHOMA};
        font-size: 12px;
        line-height: 16px;
        outline: none;
    }
`

const EmptyBox = styled.div`
    width: 411px;
    flex: none;
    background: #f1f4fb;
    border: 1px solid #c9c9f0;
    border-top-color: #e6ebf5;
`

const Footer = styled.footer`
    flex: none;
    display: grid;
    grid-template-columns: 30px 30px 1fr 86px 361px;
    column-gap: 10px;
    margin-top: 9px;
    padding-top: 15px;
    height: 43px;
    border-top: 1px solid #9a9a9a;
    box-shadow: inset 0 1px 0 #fff;
`

const DialogButton = styled.button`
    display: flex;
    align-items: center;
    justify-content: center;
    height: 27px;
    border: ${({ $primary }) => $primary ? '2px solid #0078d7' : '1px solid #adadad'};
    background: #e1e1e1;
    font-family: ${TAHOMA};
    font-size: 12px;
    ${({ $primary }) => $primary && 'grid-column: 4;'}
`

const MESSAGE = 'The stiffness matrix is singular! The structure is unstable.';
const DETAIL = 'Instability found in FE mesh node No. 3, direction X.';

const ErrorDialog = () =>
    <Dialog role='dialog' aria-label='Calculation Errors and Messages'>
        <DialogTitle>
            <h2>Calculation Errors and Messages</h2>
            <button aria-label='Close window'>
                <svg width='13' height='13' viewBox='0 0 13 13'><path d='M.5.5l12 12M12.500.5l-12 12' stroke='#000' /></svg>
            </button>
        </DialogTitle>
        <DialogBody>
            <Group>
                <h3>Error Messages</h3>
                <MessageFrame>
                    <div>
                        <MessageTable>
                            <colgroup><col width='17' /><col width='63' /><col width='90' /><col /></colgroup>
                            <thead>
                                <tr><th /><th>No.</th><th>Error No.</th><th>&nbsp;Description</th></tr>
                            </thead>
                            <tbody>
                                <tr className='selected'><td /><td>LC1</td><td>10060</td><td>{MESSAGE} {DETAIL}</td></tr>
                                <tr><td /><td /><td /><td /></tr>
                            </tbody>
                        </MessageTable>
                        <ScrollBar thumb={275} after={1} />
                    </div>
                    <ScrollBar across before={96} thumb={670} />
                </MessageFrame>
            </Group>
            <Details>
                <Group>
                    <h3><label htmlFor='error-text'>Calculation Error Description or Message</label></h3>
                    <MessageText>
                        <textarea id='error-text' readOnly value={`${MESSAGE}\n${DETAIL}`} />
                        <ScrollBar after={1} faint />
                    </MessageText>
                </Group>
                <EmptyBox />
            </Details>
            <Footer>
                <DialogButton aria-label='Help'><Icon name='help' /></DialogButton>
                <DialogButton aria-label='Show in model'><Icon name='eye' size={18} /></DialogButton>
                <DialogButton $primary>Close</DialogButton>
            </Footer>
        </DialogBody>
    </Dialog>

/* ---------- status bar ---------- */

const StatusBar = styled.footer`
    flex: none;
    display: flex;
    align-items: center;
    gap: 2px;
    height: 27px;
    padding-left: 49.750%;
    border-top: 1px solid #8f949f;
    background: linear-gradient(#dfe2e8, #c3c7d0 30%, #a8aeb9 34%, #b7bbc4);
    font-family: ${ARIAL};
`

const StatusCell = styled.button`
    height: 25px;
    padding: 0 3px 4px 2px;
    font-size: 13px;
    color: #33353b;
    border: 1px solid #000;
    border-right-color: #fff;
    border-bottom-color: #fff;

    &:nth-child(3){
        padding-left: 7px;
    }
`

const StatusPane = styled.span`
    flex: ${({ $wide }) => $wide ? '1' : '0 1 72px'};
    height: 25px;
    border-left: 1px solid #989da8;

    &:last-child{
        flex-basis: 20px;
    }
`

const App = () =>
    <Page>
        <GlobalStyle />
        <TitleBar>
            <Icon name='app' />
            <h1>RFEM 5.22.03 x64 Student - [004662_200826_StAnschliessen, LC1*]</h1>
            <WindowButton aria-label='Minimize'><svg width='13' height='13'><path d='M0 6.500h13' stroke='#8a8a8a' /></svg></WindowButton>
            <WindowButton aria-label='Maximize'><svg width='13' height='13'><path d='M.5.5h12v12H.5z' stroke='#8a8a8a' fill='none' /></svg></WindowButton>
            <WindowButton aria-label='Close'><svg width='13' height='13'><path d='M.5.5l12 12M12.500.5l-12 12' stroke='#8a8a8a' /></svg></WindowButton>
        </TitleBar>
        <MenuBar>
            <Grip />
            <Icon name='logo' />
            {MENU.map(text => <MenuItem key={text}><Mnemonic text={text} /></MenuItem>)}
            <span className='space' />
            <WindowButton $small aria-label='Minimize view'><svg width='10' height='10'><path d='M1 9h7' stroke='#666' strokeWidth='2' /></svg></WindowButton>
            <WindowButton $small aria-label='Restore view'><svg width='10' height='10'><path d='M3 1.500h6v5M.5 3.500h6v4h-6zM0 4h7' stroke='#777' fill='none' /></svg></WindowButton>
            <WindowButton $small aria-label='Close view'><svg width='10' height='10'><path d='M1 1l8 8M9 1L1 9' stroke='#666' strokeWidth='1.800' /></svg></WindowButton>
        </MenuBar>
        {TOOL_ROWS.map((row, i) =>
            <ToolRow key={i}>
                {row.map(items => <ToolSegment key={items}><Grip /><Tools items={items} /></ToolSegment>)}
            </ToolRow>
        )}
        <Workspace>
            <NavigatorPanel />
            <Right>
                <ModelView />
                <RefinementTable />
            </Right>
        </Workspace>
        <StatusBar>
            {['SNAP', 'GRID', 'CARTES', 'OSNAP', 'GLINES', 'DXF'].map(name => <StatusCell key={name}>{name}</StatusCell>)}
            <StatusPane $wide />
            <StatusPane /><StatusPane /><StatusPane /><StatusPane />
        </StatusBar>
        <ErrorDialog />
    </Page>

export default App;
